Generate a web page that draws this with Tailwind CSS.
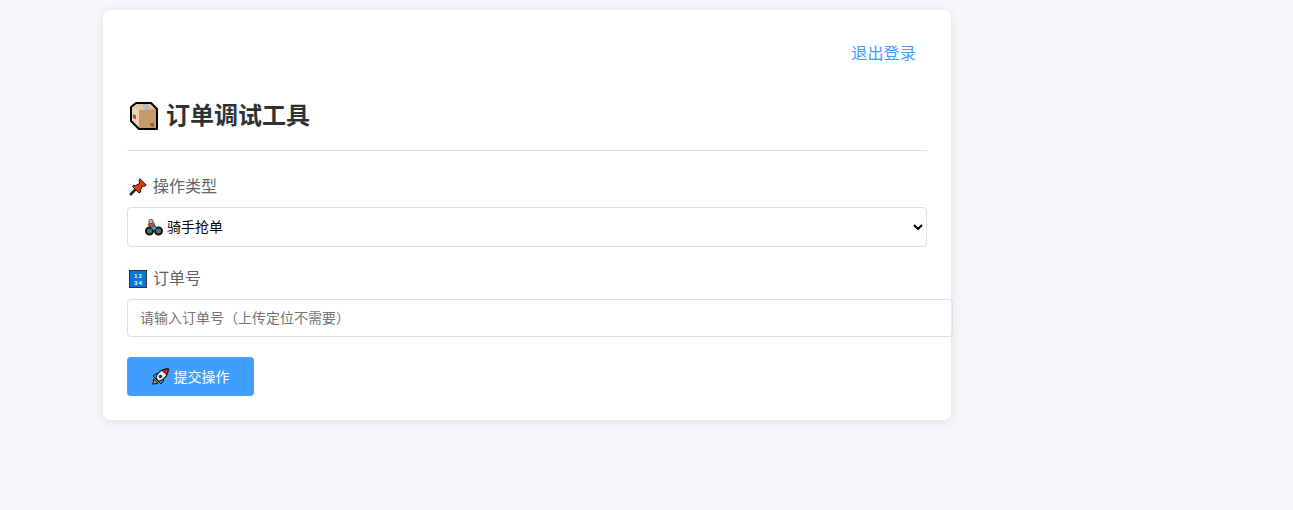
<!DOCTYPE html>
<html lang="zh-CN">
<head>
  <meta charset="UTF-8" />
  <title>订单调试工具</title>
  <script src="https://cdn.jsdelivr.net/npm/@tailwindcss/browser@4"></script>
</head>
<body class="bg-[#f5f7fa] h-[510px] overflow-hidden font-['Liberation_Sans','Noto_Sans_CJK_SC',sans-serif]">

  <div class="ml-[103px] mt-[10px] w-[848px] h-[410px] bg-white rounded-lg shadow-[0_2px_12px_rgba(0,0,0,0.1)] p-6">

    <!-- logout -->
    <div class="flex justify-end h-10 items-center pr-[11px]">
      <a href="#" class="text-base text-[#409eff] tracking-[0.2px]">退出登录</a>
    </div>

    <!-- title -->
    <h1 class="flex items-center gap-2 mt-[22px] h-10 pl-[3px] text-2xl font-bold text-[#303133]">
      <svg class="w-7 h-7 shrink-0" viewBox="0 0 28 28">
        <path d="M1 5 6 1h15l6 6v20H9l-8-8z" fill="#c49a6c" />
        <path d="M1 5 6 1h15l6 6-18 1z" fill="#e3c5a2" />
        <path d="M1 5l8 3v19l-8-8z" fill="#eed3b6" />
        <path d="M11 1h5l5 6-6 .5z" fill="#b4bec6" />
        <path d="M3 12l3 1.500v4L3 16z" fill="#e8384f" />
        <path d="M20 22h4M21 24h3" stroke="#4a3a2a" stroke-width="1" />
        <path d="M1 5 6 1h15l6 6v20H9l-8-8z" fill="none" stroke="#000" stroke-width="2" stroke-linejoin="round" />
      </svg>
      <span>订单调试工具</span>
    </h1>

    <div class="border-b border-[#dcdfe6] mt-[14px]"></div>

    <!-- action type -->
    <label class="flex items-center gap-1.5 mt-[24px] h-6 pl-[2px] text-base text-[#606266]">
      <svg class="w-[18px] h-[18px] shrink-0" viewBox="0 0 18 18">
        <path d="M1 17l6-6" stroke="#222" stroke-width="2.500" />
        <path d="M11 .8l6.200 6.200-1.200 1.200-2.500-.2-2 4 .2 2L10 15 3.500 8.500l1-1.200 2.200.2 4-2-.5-2.500z" fill="#e8380d" stroke="#111" stroke-width="1" stroke-linejoin="round" />
      </svg>
      <span>操作类型</span>
    </label>
    <div class="relative mt-2">
      <select class="block w-full h-10 rounded border border-[#dcdfe6] bg-white pl-[35px] pr-2 text-sm text-black">
        <option>骑手抢单</option>
      </select>
      <svg class="absolute left-[18px] top-[12px] w-[18px] h-[17px] pointer-events-none" viewBox="0 0 18 17">
        <circle cx="4.500" cy="12" r="3.500" fill="#56706f" stroke="#111" stroke-width="2" />
        <circle cx="13.500" cy="12" r="3.500" fill="#56706f" stroke="#111" stroke-width="2" />
        <path d="M4 6l5 0 3 3-3 3-3-3z" fill="#2f9fc7" stroke="#222" stroke-width=".8" />
        <path d="M3 6l2-3.500 4 1.500 1 3-5 0z" fill="#d8503a" stroke="#333" stroke-width=".6" />
        <circle cx="6" cy="2.500" r="2.200" fill="#f0b98c" stroke="#333" stroke-width=".8" />
      </svg>
    </div>

    <!-- order number -->
    <label class="flex items-center gap-1.5 mt-5 h-6 pl-[2px] text-base text-[#606266]">
      <svg class="w-[18px] h-[18px] shrink-0" viewBox="0 0 18 18">
        <rect x=".5" y=".5" width="17" height="17" fill="#0a78d2" stroke="#333" />
        <text x="9" y="8" text-anchor="middle" fill="#fff" font-size="5.500" font-weight="700" font-family="Liberation Sans">1 2</text>
        <text x="9" y="14.500" text-anchor="middle" fill="#fff" font-size="5.500" font-weight="700" font-family="Liberation Sans">3 4</text>
      </svg>
      <span>订单号</span>
    </label>
    <input type="text" placeholder="请输入订单号（上传定位不需要）" class="block mt-2 w-[826px] h-[38px] rounded border border-[#dcdfe6] px-3 text-sm placeholder:text-[#757575]" />

    <!-- submit -->
    <button class="flex items-center justify-center gap-[5px] mt-5 w-[127px] h-[39px] rounded bg-[#409eff] text-sm text-white">
      <svg class="w-[17px] h-[17px] shrink-0" viewBox="0 0 17 17">
        <path d="M.8 16.200l1-5.200 4.200 4.200z" fill="#f08a1d" stroke="#111" stroke-width="1" />
        <path d="M1 8l4-3 7 7-3 4z" fill="#1b9ad6" stroke="#111" stroke-width="1" />
        <path d="M4 10.500C5 5 9 1 16.200.8c0 7-4 11-9.500 12.500z" fill="#eef3f6" stroke="#111" stroke-width="1.100" />
        <path d="M10 2.500C12 1.200 14.500.8 16.200.8c0 2-.5 4.200-1.500 6z" fill="#e0102f" stroke="#111" stroke-width="1" />
        <circle cx="8.500" cy="8.500" r="1.800" fill="#2a3a4a" />
      </svg>
      <span>提交操作</span>
    </button>
  </div>

</body>
</html>
